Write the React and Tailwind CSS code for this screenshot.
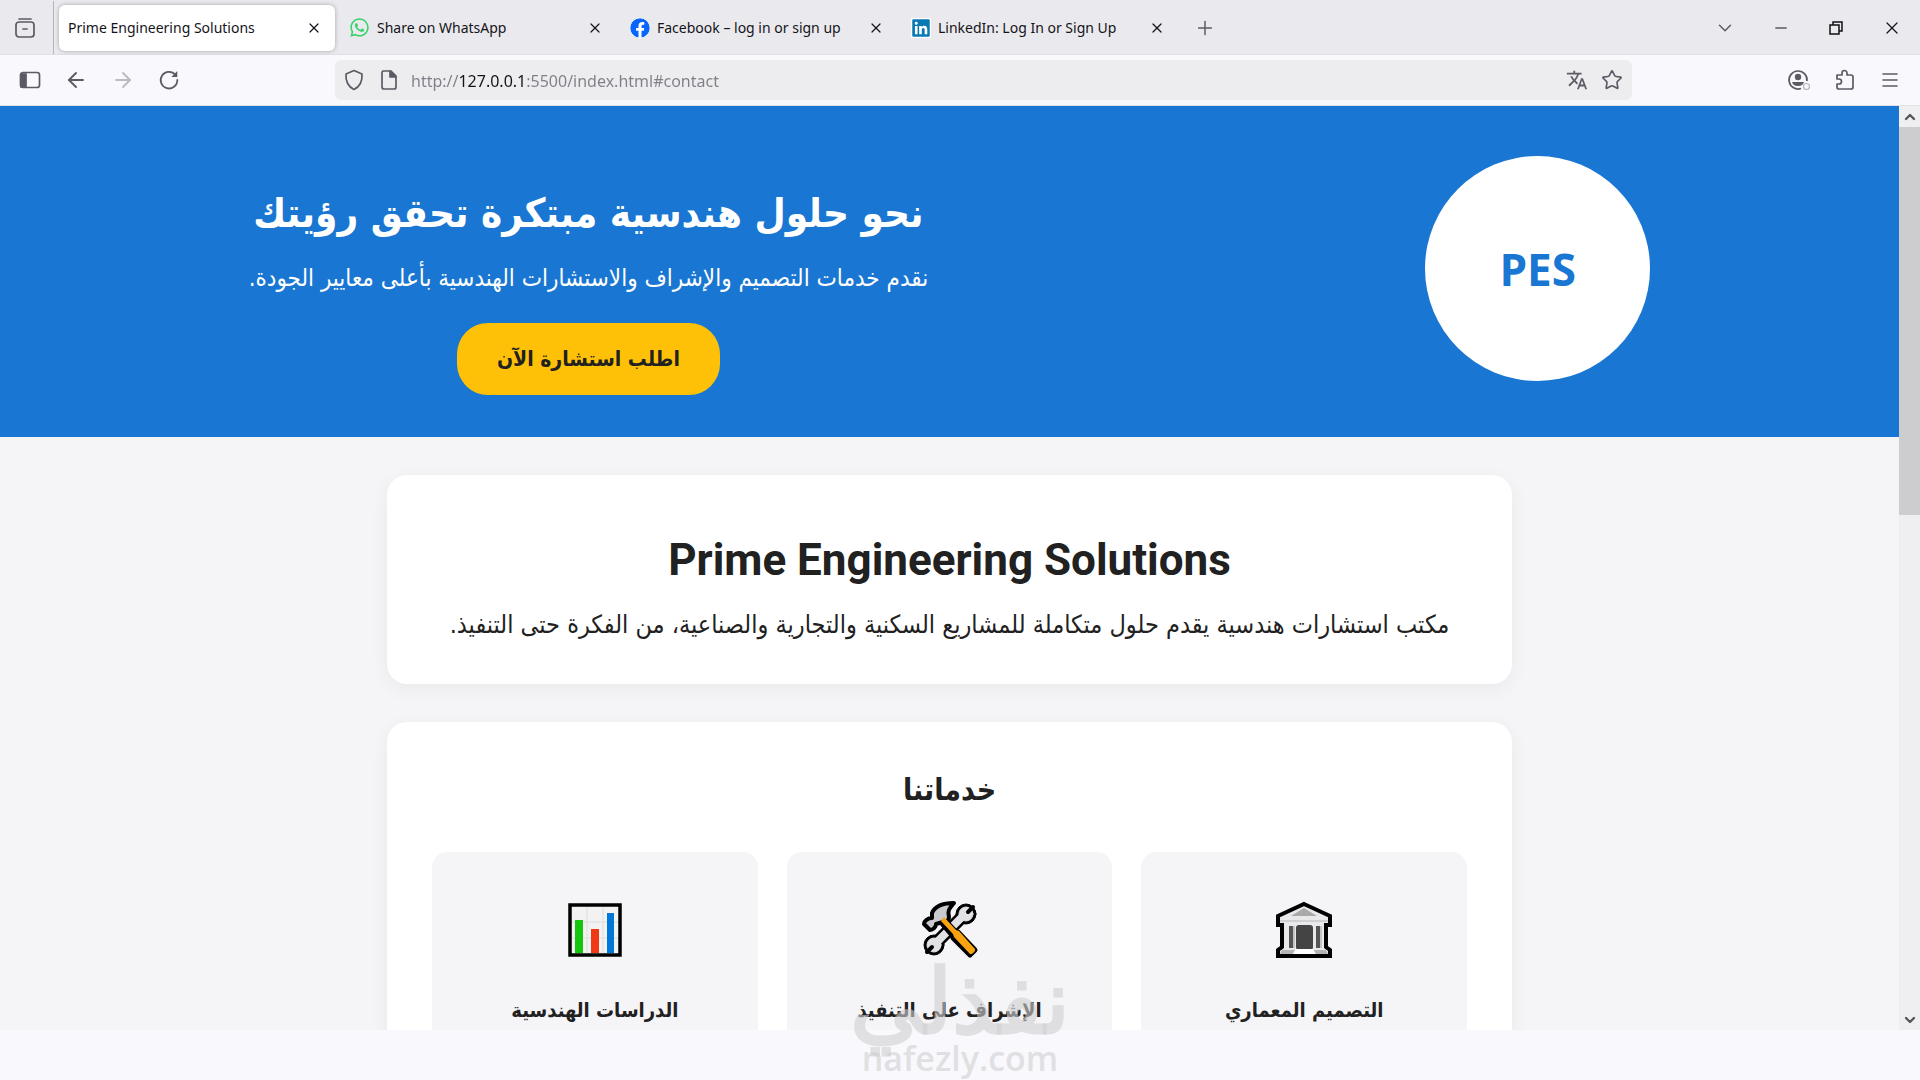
import { useState } from "react";
import { FaFacebook, FaLinkedin, FaWhatsapp } from "react-icons/fa";
import { MdTranslate } from "react-icons/md";
import { ArrowLeft, ArrowRight, ChevronDown, ChevronUp, Menu, Minus, Plus, Star, X } from "lucide-react";

const tabs = [
  { title: "Prime Engineering Solutions", icon: null },
  { title: "Share on WhatsApp", icon: <FaWhatsapp className="size-[21px] text-[#35d366]" /> },
  {
    title: "Facebook – log in or sign up",
    icon: <FaFacebook className="size-5 rounded-full bg-white text-[#0866ff]" />,
  },
  {
    title: "LinkedIn: Log In or Sign Up",
    icon: <FaLinkedin className="size-5 bg-white text-[#0a78b5]" />,
  },
];

function BankIcon() {
  return (
    <svg viewBox="0 0 60 60" className="size-[60px]" aria-hidden="true">
      <path
        d="M30 4 56 16v9h-4v22l4 3v6H4v-6l4-3V25H4v-9Z"
        fill="#e9e8ea"
        stroke="#000"
        strokeWidth="4"
      />
      <path d="M30 8 43 16H17Z" fill="#a9a9a9" />
      <path d="M6 20h48v2H6z" fill="#cfced0" />
      <rect x="22" y="25" width="17" height="25" rx="3" fill="#444" />
      <path d="M15 26h4v22h-4zM42 26h4v22h-4z" fill="#555" />
      <path d="M19 26h2v22h-2zM46 26h2v22h-2z" fill="#c4c4c6" />
      <path d="M8 50h13l-2 4H6zM39 50h13l2 4H41z" fill="#b5b5b5" />
      <path d="M22 49h17l3 5H19z" fill="#fff" />
    </svg>
  );
}

function ToolsIcon() {
  return (
    <svg viewBox="0 0 60 60" className="size-[60px]" aria-hidden="true" strokeLinecap="round" strokeLinejoin="round">
      {/* wrench */}
      <g fill="#000" stroke="#000">
        <path d="M45 14 15 44" strokeWidth="13" />
        <circle cx="46" cy="14" r="10" />
        <circle cx="14" cy="45" r="10" />
      </g>
      <g fill="#e2e1e6" stroke="#e2e1e6">
        <path d="M45 14 15 44" strokeWidth="8" />
        <circle cx="46" cy="14" r="7" />
        <circle cx="14" cy="45" r="7" />
      </g>
      <path d="m48 12 5-5M12 47l-5 5" stroke="#000" strokeWidth="4" />
      {/* hammer */}
      <path d="m23 18 12 13 3 1 17 18-5 5-17-17-1-3-12-14Z" fill="#000" stroke="#000" strokeWidth="5" />
      <path
        d="M34 3c-10 0-19 3-22 10v5c-4 0-8 3-8 6l6 6c3 0 6-3 6-6l7-2c4 0 6-2 6-5-2-7 1-9 5-14Z"
        fill="#cac9cd"
        stroke="#000"
        strokeWidth="4"
      />
      <path d="m24 17 12 13 3 1 16 18c1 2-3 6-5 5L34 37l-1-3-12-13Z" fill="#f9a310" />
    </svg>
  );
}

function ChartIcon() {
  return (
    <svg viewBox="0 0 60 60" className="size-[60px]" aria-hidden="true">
      <path d="M5 5h50v50H5z" fill="#f3f2f3" stroke="#000" strokeWidth="3.500" />
      <path d="M22 7v46M38 7v46M7 22h46M7 38h46" stroke="#e4e3e5" strokeWidth="1.500" />
      <path d="M10 20h8v33h-8z" fill="#16c60c" />
      <path d="M26 29h8v24h-8z" fill="#f03a17" />
      <path d="M42 13h7v40h-7z" fill="#0078d7" />
    </svg>
  );
}

const services = [
  { name: "التصميم المعماري", icon: <BankIcon /> },
  { name: "الإشراف على التنفيذ", icon: <ToolsIcon /> },
  { name: "الدراسات الهندسية", icon: <ChartIcon /> },
];

function TabBar() {
  const [active, setActive] = useState(0);

  return (
    <div className="flex h-[55px] shrink-0 items-center border-b border-[#e0dfe4] bg-[#eae9ed] pt-px text-[#15141a]">
      <button aria-label="Recent browsing" className="flex h-full w-[54px] items-center border-r border-[#b5b4b9] pl-[14px]">
        <svg viewBox="0 0 22 22" className="size-[22px]" fill="none" stroke="#5b5b66" strokeWidth="1.700" strokeLinecap="round">
          <path d="M5 2h12" />
          <rect x="2" y="5" width="18" height="15" rx="3" />
          <path d="M9 12h4" />
        </svg>
      </button>
      <div role="tablist" className="flex gap-[5px] pl-[5px]">
        {tabs.map((tab, i) => (
          <div
            key={tab.title}
            className={
              active === i
                ? "flex h-[46px] w-[276px] items-center rounded-md bg-white pr-3 pl-[9px] shadow-[0_0_4px_rgba(0,0,0,0.3)]"
                : "flex h-[46px] w-[276px] items-center rounded-md pr-3 pl-[9px]"
            }
          >
            <button
              role="tab"
              aria-selected={active === i}
              onClick={() => setActive(i)}
              className="flex flex-1 items-center gap-[7px] text-[14px] whitespace-nowrap"
            >
              {tab.icon}
              {tab.title}
            </button>
            <button aria-label={"Close " + tab.title} className="p-px">
              <X className="size-4" strokeWidth={1.8} />
            </button>
          </div>
        ))}
      </div>
      <button aria-label="New tab" className="ml-4">
        <Plus className="size-[22px] text-[#5b5b66]" strokeWidth={1.6} />
      </button>
      <div className="ml-auto flex items-center gap-9 pr-[18px]">
        <button aria-label="List all tabs">
          <ChevronDown className="size-[22px] text-[#5b5b66]" strokeWidth={1.6} />
        </button>
        <button aria-label="Minimize">
          <Minus className="size-[18px]" strokeWidth={1.5} />
        </button>
        <button aria-label="Restore">
          <svg viewBox="0 0 20 20" className="size-5" fill="none" stroke="#111" strokeWidth="1.500">
            <path d="M4 7h9v9H4zM7 7V4h9v9h-3" />
          </svg>
        </button>
        <button aria-label="Close window">
          <X className="size-5" strokeWidth={1.5} />
        </button>
      </div>
    </div>
  );
}

function Toolbar() {
  return (
    <div className="flex h-[51px] shrink-0 items-center border-b border-[#e2e1e6] bg-[#f9f8fc] text-[#5b5b66]">
      <div className="flex w-[335px] shrink-0 items-center gap-[23px] pl-[19px]">
        <button aria-label="Sidebar">
          <svg viewBox="0 0 22 22" className="size-[22px]" fill="none" stroke="currentColor" strokeWidth="1.700">
            <rect x="1.500" y="3.500" width="19" height="15" rx="2.500" />
            <path d="M2 5h5v13H2z" fill="currentColor" />
          </svg>
        </button>
        <button aria-label="Back">
          <ArrowLeft className="size-6" strokeWidth={1.9} />
        </button>
        <button aria-label="Forward" disabled className="text-[#bcbbc1]">
          <ArrowRight className="size-6" strokeWidth={1.9} />
        </button>
        <button aria-label="Reload">
          <svg viewBox="0 0 22 22" className="size-[22px]" fill="none" stroke="currentColor" strokeWidth="1.800" strokeLinecap="round">
            <path d="M17.500 6A8.300 8.300 0 1 0 19.300 11" />
            <path d="M19.300 2v6h-6Z" fill="currentColor" stroke="none" />
          </svg>
        </button>
      </div>
      <div className="flex h-10 flex-1 items-center rounded-md bg-[#ededf0] pr-[9px] pl-2">
        <svg viewBox="0 0 22 22" className="size-[22px]" fill="none" stroke="currentColor" strokeWidth="1.700" strokeLinejoin="round">
          <path d="m11 1.500 8 3.500c.5 7-2 12.500-8 15.500C5 17.500 2.500 12 3 5Z" />
        </svg>
        <svg viewBox="0 0 22 22" className="ml-[13px] size-[22px]" fill="none" stroke="currentColor" strokeWidth="1.700" strokeLinejoin="round">
          <path d="M5 2h8l5 5v11a2 2 0 0 1-2 2H6a2 2 0 0 1-2-2V4a2 2 0 0 1 1-2Z" />
          <path d="M12 2v6h6Z" fill="currentColor" />
        </svg>
        <input
          aria-label="Address"
          defaultValue="http://127.0.0.1:5500/index.html#contact"
          className="ml-[11px] min-w-0 flex-1 bg-[linear-gradient(90deg,#7f7f87_49px,#15141a_49px,#15141a_114px,#7f7f87_114px)] bg-clip-text pt-[2px] text-base text-transparent outline-none"
        />
        <button aria-label="Translate">
          <MdTranslate className="size-[22px]" />
        </button>
        <button aria-label="Bookmark" className="ml-[13px]">
          <Star className="size-[22px]" strokeWidth={1.8} />
        </button>
      </div>
      <div className="flex w-[288px] shrink-0 items-center justify-end gap-[23px] pr-[19px]">
        <button aria-label="Account">
          <svg viewBox="0 0 24 22" className="h-[22px] w-6" fill="none" stroke="currentColor" strokeWidth="1.700">
            <path d="M14 19.500A9 9 0 1 1 20 12" />
            <circle cx="11" cy="8" r="3.200" fill="currentColor" stroke="none" />
            <path d="M5 13h12c-1 3-3 4-6 4s-5-1-6-4Z" fill="currentColor" stroke="none" />
            <circle cx="19.500" cy="17.500" r="3" stroke="#b5b4b9" strokeWidth="1.200" />
          </svg>
        </button>
        <button aria-label="Extensions">
          <svg viewBox="0 0 22 22" className="size-[22px]" fill="none" stroke="currentColor" strokeWidth="1.700" strokeLinejoin="round">
            <path d="M3 6h5V4a2.500 2.500 0 0 1 5 0v2h4a2 2 0 0 1 2 2v10a2 2 0 0 1-2 2H5a2 2 0 0 1-2-2v-3h2a2.200 2.200 0 0 0 0-5H3Z" />
          </svg>
        </button>
        <button aria-label="Menu">
          <svg viewBox="0 0 22 22" className="size-[22px]" stroke="currentColor" strokeWidth="1.600" strokeLinecap="round">
            <path d="M4 5h14M4 11h14M4 17h14" />
          </svg>
        </button>
      </div>
    </div>
  );
}

function Hero() {
  return (
    <header className="flex items-start justify-around bg-[#1976d2] pt-[50px] pb-[42px] text-white">
      <div className="flex size-[225px] items-center justify-center rounded-full bg-white font-['Noto_Sans',sans-serif] text-[44px] font-bold text-[#1976d2]">
        PES
      </div>
      <div className="flex flex-col items-center whitespace-nowrap">
        <h2 className="mt-5 text-[40px] leading-[74px] font-bold">نحو حلول هندسية مبتكرة تحقق رؤيتك</h2>
        <p className="mt-2 text-[24px] leading-10">
          نقدم خدمات التصميم والإشراف والاستشارات الهندسية بأعلى معايير الجودة.
        </p>
        <a
          href="#contact"
          className="mt-[25px] rounded-[31px] bg-[#ffc107] px-10 text-[21px] leading-[72px] font-bold text-[#212121]"
        >
          اطلب استشارة الآن
        </a>
      </div>
    </header>
  );
}

function Watermark() {
  return (
    <div className="pointer-events-none absolute inset-x-0 bottom-0 flex flex-col items-center leading-none font-bold text-[#cfced1]/60">
      <span dir="rtl" className="text-[90px] leading-[76px]">نفذلي</span>
      <span className="font-['Open_Sans',sans-serif] text-[34px] leading-[44px] font-semibold">nafezly.com</span>
    </div>
  );
}

export default function App() {
  return (
    <div className="relative flex h-screen flex-col overflow-hidden bg-[#f9f8fc] font-['Noto_Sans',sans-serif]">
      <TabBar />
      <Toolbar />

      <div className="flex min-h-0 flex-1">
        <div
          dir="rtl"
          className="flex-1 overflow-hidden bg-[#f5f4f7] font-['DejaVu_Sans_Condensed','DejaVu_Sans',sans-serif] text-[#212121]"
        >
          <Hero />
          <main className="mx-auto flex max-w-[1125px] flex-col gap-[38px] pt-[38px] text-center">
            <section className="rounded-[20px] bg-white px-11 pt-[50px] pb-[38px] shadow-[0_5px_19px_rgba(0,0,0,0.05)]">
              <h1 dir="ltr" className="font-[Roboto,sans-serif] text-[44px] leading-[70px] font-bold">
                Prime Engineering Solutions
              </h1>
              <p className="mt-2 text-[25px] leading-[43px] whitespace-nowrap">
                مكتب استشارات هندسية يقدم حلول متكاملة للمشاريع السكنية والتجارية والصناعية، من الفكرة حتى التنفيذ.
              </p>
            </section>

            <section className="rounded-[20px] bg-white px-[45px] pt-[38px] shadow-[0_5px_19px_rgba(0,0,0,0.05)]">
              <h2 className="text-[30px] leading-[60px] font-bold">خدماتنا</h2>
              <div className="mt-8 grid grid-cols-3 gap-[29px]">
                {services.map((service) => (
                  <article key={service.name} className="flex h-[280px] flex-col items-center rounded-[15px] bg-[#f5f4f7] pt-12">
                    {service.icon}
                    <h3 className="mt-[30px] text-[20px] leading-10 font-bold">{service.name}</h3>
                  </article>
                ))}
              </div>
            </section>
          </main>
        </div>

        {/* Scrollbar */}
        <div className="flex w-[21px] shrink-0 flex-col items-center bg-[#efeef1] text-[#55545a]">
          <button aria-label="Scroll up" className="flex h-[21px] items-center">
            <ChevronUp className="size-4" strokeWidth={3.5} />
          </button>
          <div className="h-[42%] w-full bg-[#cdcccf]" />
          <button aria-label="Scroll down" className="mt-auto flex h-[21px] items-center">
            <ChevronDown className="size-4" strokeWidth={3.5} />
          </button>
        </div>
      </div>

      <div className="h-[50px] shrink-0" />
      <Watermark />
    </div>
  );
}
